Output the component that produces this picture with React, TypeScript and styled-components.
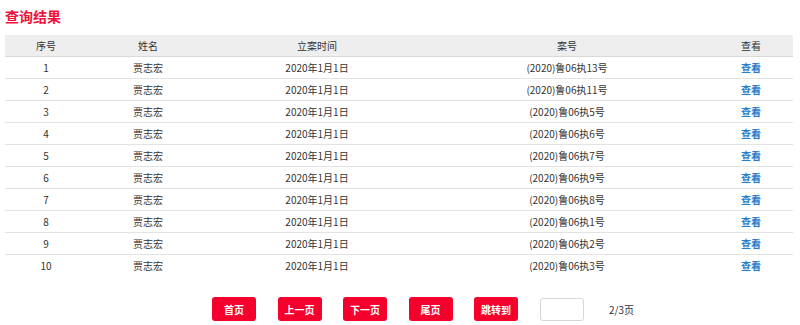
import styled, { createGlobalStyle } from "styled-components";

const GlobalStyle = createGlobalStyle`
  body {
    margin: 0;
    background: #fff;
    font-family: "Noto Sans CJK SC", "Noto Sans", sans-serif;
    color: #333;
  }
`;

const Page = styled.div`
  width: 800px;
  height: 325px;
  padding: 0 7px 0 5px;
  box-sizing: border-box;
  overflow: hidden;
`;

const Title = styled.h2`
  margin: 0;
  height: 35px;
  line-height: 32px;
  font-size: 14px;
  font-weight: bold;
  color: #f0123a;
`;

const Table = styled.table`
  width: 788px;
  border-collapse: collapse;
  table-layout: fixed;
  font-size: 10px;
`;

const HeadCell = styled.th<{ $w: number }>`
  width: ${(p) => p.$w}px;
  height: 21px;
  padding: 0;
  background: #eeeeee;
  border-bottom: 1px solid #d9d9d9;
  font-weight: normal;
  color: #333;
  text-align: center;
`;

const Row = styled.tr`
  border-bottom: 1px solid #e3e3e3;

  &:last-child {
    border-bottom: none;
  }
`;

const Cell = styled.td`
  height: 21px;
  padding: 0;
  text-align: center;
  color: #333;
`;

const ViewLink = styled.a`
  color: #2b7cc7;
  font-weight: bold;
  text-decoration: none;
`;

const Pager = styled.div`
  display: flex;
  align-items: center;
  gap: 21.5px;
  margin: 21px 0 0 207px;
`;

const PageButton = styled.button`
  width: 44px;
  height: 24px;
  border: none;
  border-radius: 3px;
  background: #f5002d;
  color: #fff;
  font-family: inherit;
  font-size: 10px;
  font-weight: bold;
  padding: 0;
`;

const JumpInput = styled.input`
  width: 44px;
  height: 23px;
  box-sizing: border-box;
  border: 1px solid #d6d6d6;
  border-radius: 3px;
`;

const PageInfo = styled.span`
  font-size: 10px;
  color: #333;
  margin-left: 4px;
`;

const columns = [
  { title: "序号", w: 82 },
  { title: "姓名", w: 122 },
  { title: "立案时间", w: 216 },
  { title: "案号", w: 284 },
  { title: "查看", w: 84 },
];

const caseNos = [13, 11, 5, 6, 7, 9, 8, 1, 2, 3];

export default function App() {
  return (
    <Page>
      <GlobalStyle />
      <Title>查询结果</Title>
      <Table>
        <thead>
          <tr>
            {columns.map((c) => (
              <HeadCell key={c.title} $w={c.w}>
                {c.title}
              </HeadCell>
            ))}
          </tr>
        </thead>
        <tbody>
          {caseNos.map((n, i) => (
            <Row key={i}>
              <Cell>{i + 1}</Cell>
              <Cell>贾志宏</Cell>
              <Cell>2020年1月1日</Cell>
              <Cell>(2020)鲁06执{n}号</Cell>
              <Cell>
                <ViewLink href="#">查看</ViewLink>
              </Cell>
            </Row>
          ))}
        </tbody>
      </Table>
      <Pager>
        <PageButton>首页</PageButton>
        <PageButton>上一页</PageButton>
        <PageButton>下一页</PageButton>
        <PageButton>尾页</PageButton>
        <PageButton>跳转到</PageButton>
        <JumpInput />
        <PageInfo>2/3页</PageInfo>
      </Pager>
    </Page>
  );
}
